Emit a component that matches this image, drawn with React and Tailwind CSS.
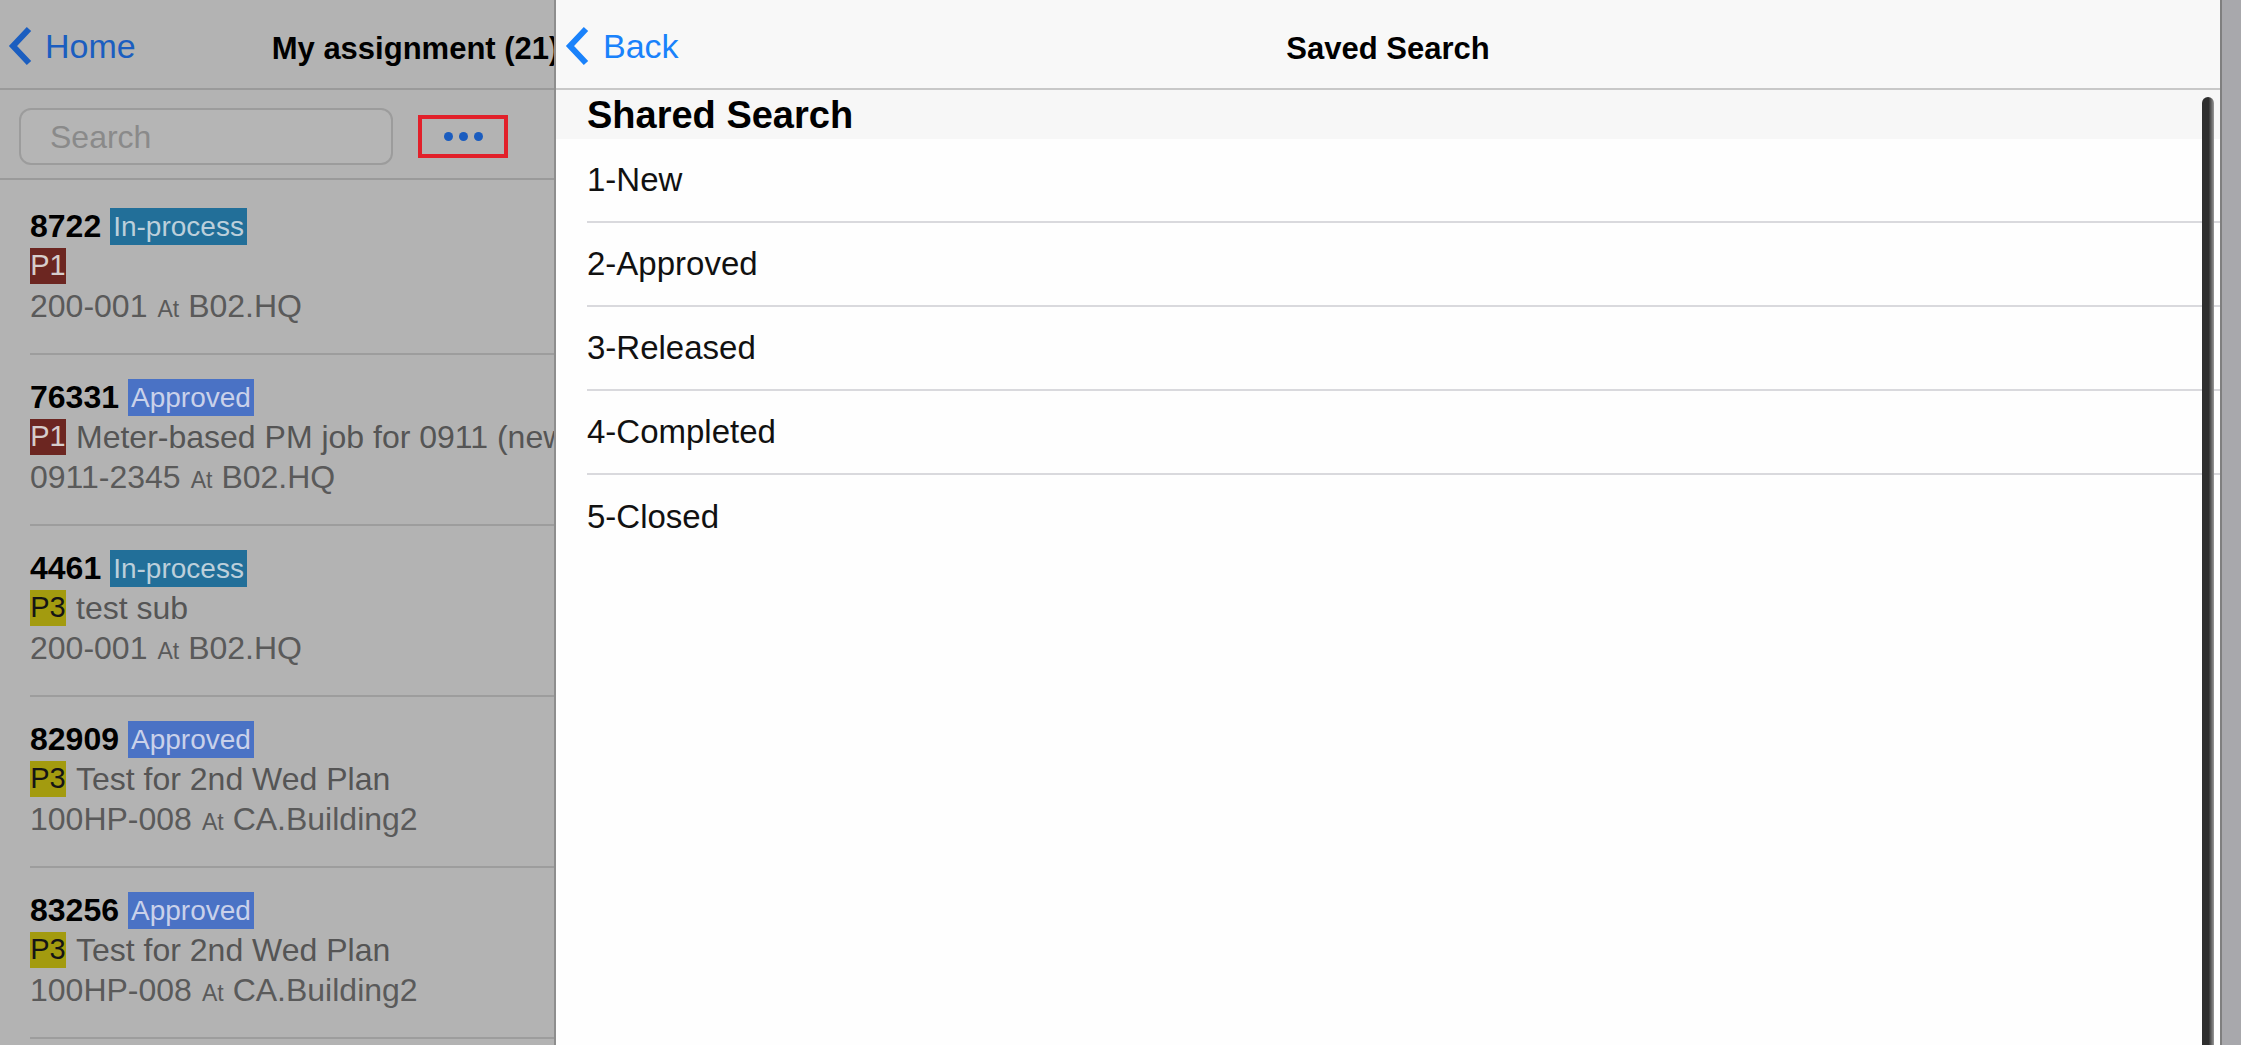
import React from "react";

const font = "font-['Liberation_Sans',Arial,sans-serif]";

const items = [
  { id: "8722", status: "In-process", pri: "P1", desc: "", code: "200-001", site: "B02.HQ" },
  { id: "76331", status: "Approved", pri: "P1", desc: "Meter-based PM job for 0911 (new)", code: "0911-2345", site: "B02.HQ" },
  { id: "4461", status: "In-process", pri: "P3", desc: "test sub", code: "200-001", site: "B02.HQ" },
  { id: "82909", status: "Approved", pri: "P3", desc: "Test for 2nd Wed Plan", code: "100HP-008", site: "CA.Building2" },
  { id: "83256", status: "Approved", pri: "P3", desc: "Test for 2nd Wed Plan", code: "100HP-008", site: "CA.Building2" },
  { id: "83301", status: "Approved", pri: "P3", desc: "Test for 2nd Wed Plan", code: "100HP-008", site: "CA.Building2" },
];

const searches = ["1-New", "2-Approved", "3-Released", "4-Completed", "5-Closed"];

function Chevron({ color }) {
  return (
    <svg width="26" height="40" viewBox="0 0 26 40" className="shrink-0">
      <polyline points="22,3 6,20 22,37" fill="none" stroke={color} strokeWidth="6" strokeLinejoin="miter" />
    </svg>
  );
}

function StatusBadge({ status }) {
  const cls = status === "In-process" ? "bg-[#226f99] text-[#bccfdb]" : "bg-[#4a72c5] text-[#c9d1ea]";
  return <span className={`ml-[9px] h-[37px] px-[3px] text-[28px] leading-[37px] ${cls}`}>{status}</span>;
}

function PriBadge({ pri }) {
  const cls = pri === "P1" ? "bg-[#6c2621] text-[#d6cdcc]" : "bg-[#a39b0f] text-[#151515]";
  return <span className={`flex h-[36px] w-[36px] shrink-0 items-center justify-center text-[29px] ${cls}`}>{pri}</span>;
}

function AssignmentRow({ item }) {
  return (
    <div className="ml-[30px] border-b-2 border-[#9d9d9d] pt-[22px] pb-[27px]">
      <div className="flex h-[40px] items-center">
        <span className="text-[32px] font-bold text-black">{item.id}</span>
        <StatusBadge status={item.status} />
      </div>
      <div className="flex h-[40px] items-center whitespace-nowrap">
        <PriBadge pri={item.pri} />
        {item.desc && <span className="ml-[10px] text-[32px] text-[#555555]">{item.desc}</span>}
      </div>
      <div className="flex h-[40px] items-baseline whitespace-nowrap text-[32px] leading-[40px] text-[#5a5a5a]">
        <span>{item.code}</span>
        <span className="ml-[10px] text-[23px]">At</span>
        <span className="ml-[9px]">{item.site}</span>
      </div>
    </div>
  );
}

export default function App() {
  return (
    <div className={`flex h-[1045px] w-[2241px] overflow-hidden ${font}`}>
      {/* dimmed master list */}
      <div className="w-[554px] shrink-0 overflow-hidden bg-[#b3b3b3]">
        <div className="flex h-[90px] items-center whitespace-nowrap border-b-2 border-[#9a9a9a] pl-[7px]">
          <div className="mt-[4px] flex items-center">
            <Chevron color="#1b5ec0" />
            <span className="ml-[12px] text-[34px] text-[#1b5ec0]">Home</span>
          </div>
          <span className="mt-[11px] ml-[136px] text-[31px] font-bold text-black">My assignment (21)</span>
        </div>
        <div className="flex h-[90px] items-center border-b-2 border-[#9a9a9a] pt-[4px]">
          <div className="ml-[19px] flex h-[57px] w-[374px] items-center rounded-[12px] border-2 border-[#9c9c9c] bg-[#b5b5b5] pt-[2px] pl-[29px] text-[32px] text-[#8a8a8a]">
            Search
          </div>
          <div className="ml-[25px] flex h-[43px] w-[90px] items-center justify-center gap-[6px] border-4 border-[#e2202a]">
            <span className="h-[9px] w-[9px] rounded-full bg-[#1a5cbf]" />
            <span className="h-[9px] w-[9px] rounded-full bg-[#1a5cbf]" />
            <span className="h-[9px] w-[9px] rounded-full bg-[#1a5cbf]" />
          </div>
        </div>
        <div className="pt-[4px]">
          {items.map(it => (
            <AssignmentRow key={it.id} item={it} />
          ))}
        </div>
      </div>

      {/* saved search panel */}
      <div className="relative flex flex-1 flex-col border-l-2 border-[#8e8e8e] bg-[#fefefe]">
        <div className="grid h-[90px] grid-cols-[1fr_auto_1fr] items-center border-b-2 border-[#c8c8c8] bg-[#f8f8f8]">
          <div className="mt-[4px] flex items-center pl-[8px]">
            <Chevron color="#1a82fb" />
            <span className="ml-[13px] text-[34px] text-[#1a82fb]">Back</span>
          </div>
          <span className="mt-[11px] text-[31px] font-bold text-black">Saved Search</span>
          <div />
        </div>
        <div className="flex h-[49px] items-center bg-[#f7f7f7] pt-[2px] pl-[31px] text-[38px] font-bold text-black">
          Shared Search
        </div>
        <div>
          {searches.map((s, i) => (
            <div
              key={s}
              className={`ml-[31px] flex h-[84px] items-center text-[33px] text-[#111111] ${i < searches.length - 1 ? "border-b-2 border-[#d9d9dd]" : ""}`}
            >
              {s}
            </div>
          ))}
        </div>
        <div className="absolute top-[97px] right-[6px] bottom-0 w-[12px] rounded-t-full bg-linear-to-r from-[#2f2f2f] from-55% to-[#9a9a9a]" />
      </div>

      <div className="w-[21px] shrink-0 border-l-2 border-[#7f7f7f] bg-[#a8a8ac]" />
    </div>
  );
}
